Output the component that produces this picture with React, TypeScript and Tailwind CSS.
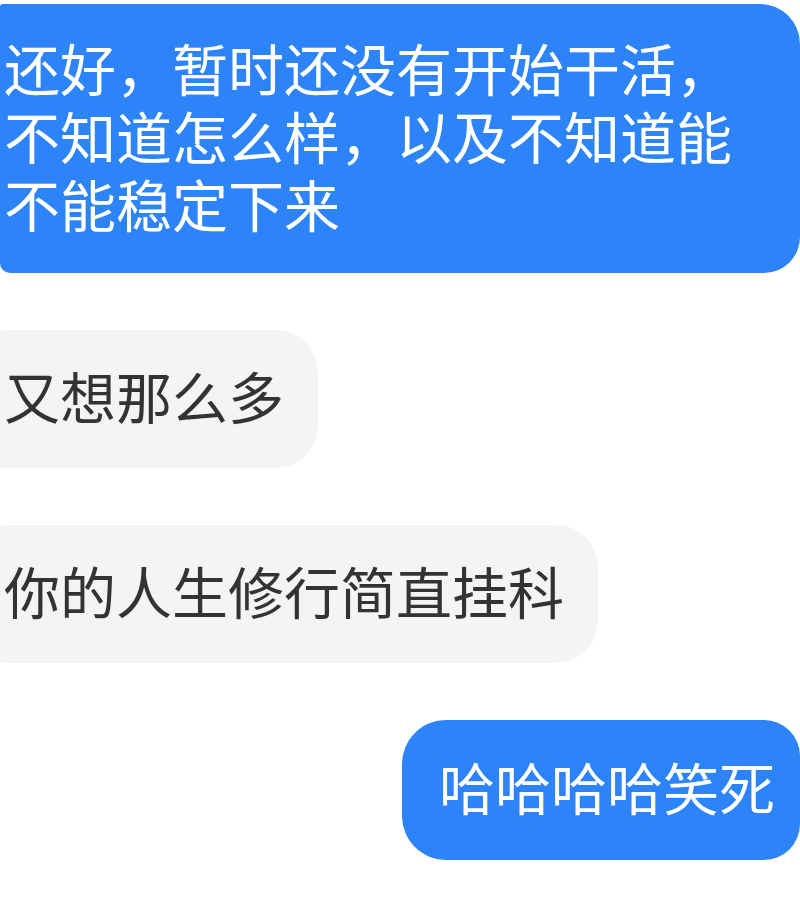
import React from 'react';

type Message = {
  id: number;
  mine: boolean;
  lines: string[];
};

const messages: Message[] = [
  { id: 1, mine: true, lines: ['还好，暂时还没有开始干活，', '不知道怎么样，以及不知道能', '不能稳定下来'] },
  { id: 2, mine: false, lines: ['又想那么多'] },
  { id: 3, mine: false, lines: ['你的人生修行简直挂科'] },
  { id: 4, mine: true, lines: ['哈哈哈哈笑死'] },
];

const font = { fontFamily: '"Noto Sans CJK SC", "Noto Sans", sans-serif' };

const App: React.FC = () => {
  const first = messages[0];

  return (
    <div className="w-[800px] h-[920px] bg-white overflow-hidden pt-[4px]" style={font}>
      <div className="flex flex-col gap-[57px]">
        <div className="w-[800px] bg-[#2d84f9] text-white text-[56px] leading-[68px] pl-[4px] pt-[29px] pb-[36px] rounded-tl-[3px] rounded-bl-[10px] rounded-tr-[40px] rounded-br-[36px]">
          <p className="whitespace-nowrap">
            {first.lines.map((l, i) => (
              <React.Fragment key={i}>
                {l}
                {i < first.lines.length - 1 && <br />}
              </React.Fragment>
            ))}
          </p>
        </div>

        {messages.slice(1).map(m =>
          m.mine ? (
            <div key={m.id} className="flex justify-end">
              <div className="bg-[#2d84f9] text-white text-[56px] leading-[68px] pl-[37px] pr-[25px] pt-[32px] pb-[40px] rounded-[44px] rounded-r-[36px] whitespace-nowrap">
                {m.lines[0]}
              </div>
            </div>
          ) : (
            <div key={m.id} className="flex justify-start">
              <div className="bg-[#f4f4f4] text-[#333333] text-[56px] leading-[68px] pl-[4px] pr-[34px] pt-[31px] pb-[39px] rounded-l-[4px] rounded-r-[42px] whitespace-nowrap">
                {m.lines[0]}
              </div>
            </div>
          )
        )}
      </div>
    </div>
  );
};

export default App;
